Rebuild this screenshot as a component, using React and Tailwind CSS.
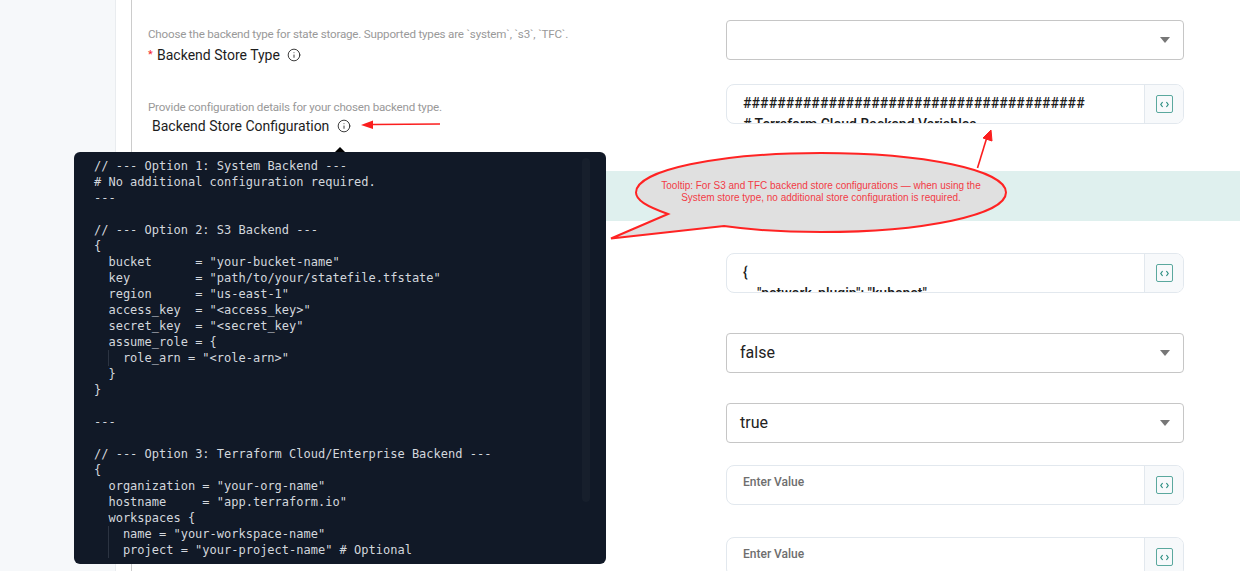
import React from 'react';
import { Info } from 'lucide-react';

const CODE_LINES = [
  '// --- Option 1: System Backend ---',
  '# No additional configuration required.',
  '---',
  '',
  '// --- Option 2: S3 Backend ---',
  '{',
  '  bucket      = "your-bucket-name"',
  '  key         = "path/to/your/statefile.tfstate"',
  '  region      = "us-east-1"',
  '  access_key  = "<access_key>"',
  '  secret_key  = "<secret_key"',
  '  assume_role = {',
  { nested: 'role_arn = "<role-arn>"' },
  '  }',
  '}',
  '',
  '---',
  '',
  '// --- Option 3: Terraform Cloud/Enterprise Backend ---',
  '{',
  '  organization = "your-org-name"',
  '  hostname     = "app.terraform.io"',
  '  workspaces {',
  { nested: 'name = "your-workspace-name"' },
  { nested: 'project = "your-project-name" # Optional' },
];

function CodeIcon() {
  return (
    <div className="w-[17px] h-[18px] rounded-[2px] border-[1.5px] border-[#5aa89e] flex items-center justify-center">
      <svg width="9" height="7" viewBox="0 0 9 7" fill="none" stroke="#2f8f83" strokeWidth="1.2">
        <path d="M2.6 1 L0.8 3.5 L2.6 6" />
        <path d="M6.4 1 L8.2 3.5 L6.4 6" />
      </svg>
    </div>
  );
}

function SelectBox({ value, className }) {
  return (
    <div className={`h-10 rounded border border-[#c6c6c6] flex items-center justify-between pl-[13px] pr-[13px] bg-white ${className}`}>
      <span className="text-base text-[#222]">{value}</span>
      <span className="w-0 h-0 border-x-[5.5px] border-x-transparent border-t-[6px] border-t-[#777]" />
    </div>
  );
}

function EditorBox({ children, className }) {
  return (
    <div className={`h-10 rounded-lg border border-[#e2e8ee] flex overflow-hidden bg-white ${className}`}>
      <div className="flex-1 overflow-hidden pl-4 pt-2 text-sm leading-[21px] font-medium text-[#1c1c1c] whitespace-pre">
        {children}
      </div>
      <div className="w-[39px] bg-[#f7f9fb] border-l border-[#e2e8ee] flex items-center justify-center">
        <CodeIcon />
      </div>
    </div>
  );
}

function Placeholder() {
  return <div className="text-xs leading-[16px] font-medium text-[#6e6e6e]">Enter Value</div>;
}

export default function App() {
  return (
    <div className="relative h-[571px] overflow-hidden bg-white flex font-['Roboto',sans-serif]">
      {/* Sidebar */}
      <div className="w-[116px] shrink-0 bg-[#f6f8fa] border-r border-[#e9ecef]" />

      {/* Form */}
      <div className="flex-1 pl-[15px]">
        <div className="h-[620px] border-l border-[#cccccc] pt-5">
          <div className="flex h-10 pl-4">
            <div className="w-[578px] pt-[7px]">
              <p className="text-[11.6px] tracking-[-0.19px] leading-[14px] text-[#999]">Choose the backend type for state storage. Supported types are `system`, `s3`, `TFC`.</p>
              <div className="mt-[5px] flex items-center h-[18px] text-sm text-[#1d1d1d]">
                <span className="text-[#f5222d] text-[11px] w-[9px]">*</span>
                <span>Backend Store Type</span>
                <Info size={14} strokeWidth={1.5} className="ml-[7px] text-[#222]" />
              </div>
            </div>
            <SelectBox className="w-[458px]" />
          </div>

          <div className="flex h-10 pl-4 mt-6">
            <div className="w-[578px] pt-4">
              <p className="text-[11.6px] tracking-[-0.19px] leading-[14px] text-[#999]">Provide configuration details for your chosen backend type.</p>
              <div className="mt-[3px] pl-1 flex items-center h-[18px] text-sm text-[#1d1d1d]">
                <span>Backend Store Configuration</span>
                <Info size={14} strokeWidth={1.5} className="ml-2 text-[#222]" />
              </div>
            </div>
            <EditorBox className="w-[458px]">
              <span className="tracking-[0.1px]">########################################</span>
              {'\n# Terraform Cloud Backend Variables'}
            </EditorBox>
          </div>

          <div className="h-[50px] mt-[47px] bg-[#dff0ee]" />

          <div className="pl-[594px] mt-8">
            <EditorBox className="w-[458px]">{'{\n    "network_plugin": "kubenet"'}</EditorBox>
            <SelectBox value="false" className="w-[458px] mt-10" />
            <SelectBox value="true" className="w-[458px] mt-[30px]" />
            <EditorBox className="w-[458px] mt-[22px]"><Placeholder /></EditorBox>
            <EditorBox className="w-[458px] mt-8"><Placeholder /></EditorBox>
          </div>
        </div>
      </div>

      {/* Code tooltip */}
      <div className="absolute left-[74px] top-[152px] w-[532px] h-[412px] rounded-md bg-[#111927] overflow-hidden pl-5 pt-1.5">
        <pre className="font-['DejaVu_Sans_Mono',monospace] text-xs leading-4 text-[#d3d7dd]">
          {CODE_LINES.map((line, i) => (
            <div key={i} className="h-4">
              {typeof line === 'string' ? line : (
                <>
                  <span className="inline-block w-[2ch] h-4 align-top" />
                  <span className="inline-block w-[2ch] h-4 align-top border-l border-[#2c3442]" />
                  {line.nested}
                </>
              )}
            </div>
          ))}
        </pre>
        <div className="absolute left-[508px] top-1.5 w-2 h-[344px] rounded bg-[#171f2c]" />
      </div>
      <div className="absolute left-[335px] top-[147px] w-0 h-0 border-x-[5px] border-x-transparent border-b-[5px] border-b-black" />

      {/* Annotation arrows and callout */}
      <svg className="absolute inset-0 pointer-events-none" width="1240" height="571" viewBox="0 0 1240 571" fill="none">
        <path d="M373 124.5 L440 124" stroke="#fb1e1e" strokeWidth="1.6" />
        <path d="M361 125 L373 120.5 L373 129 Z" fill="#fb1e1e" />
        <path d="M977.5 168 L987 137" stroke="#fb1e1e" strokeWidth="1.6" />
        <path d="M991 130 L983 138 L992 141 Z" fill="#fb1e1e" stroke="#fb1e1e" />
        <path
          d="M668 214 C646 206 636 200 636 192.5 C636 170 719 153 821 153 C923 153 1006 170 1006 192.5 C1006 215 923 232 821 232 C784 232 752 230 724 226 L611 238.5 Z"
          fill="#e0e0e0"
          stroke="#ff2323"
          strokeWidth="2"
        />
      </svg>
      <div className="absolute left-[646px] top-[180px] w-[350px] text-center text-[10px] leading-3 text-[#f23b46] font-['Liberation_Sans',sans-serif]">
        Tooltip: For S3 and TFC backend store configurations — when using the<br />
        System store type, no additional store configuration is required.
      </div>
    </div>
  );
}
